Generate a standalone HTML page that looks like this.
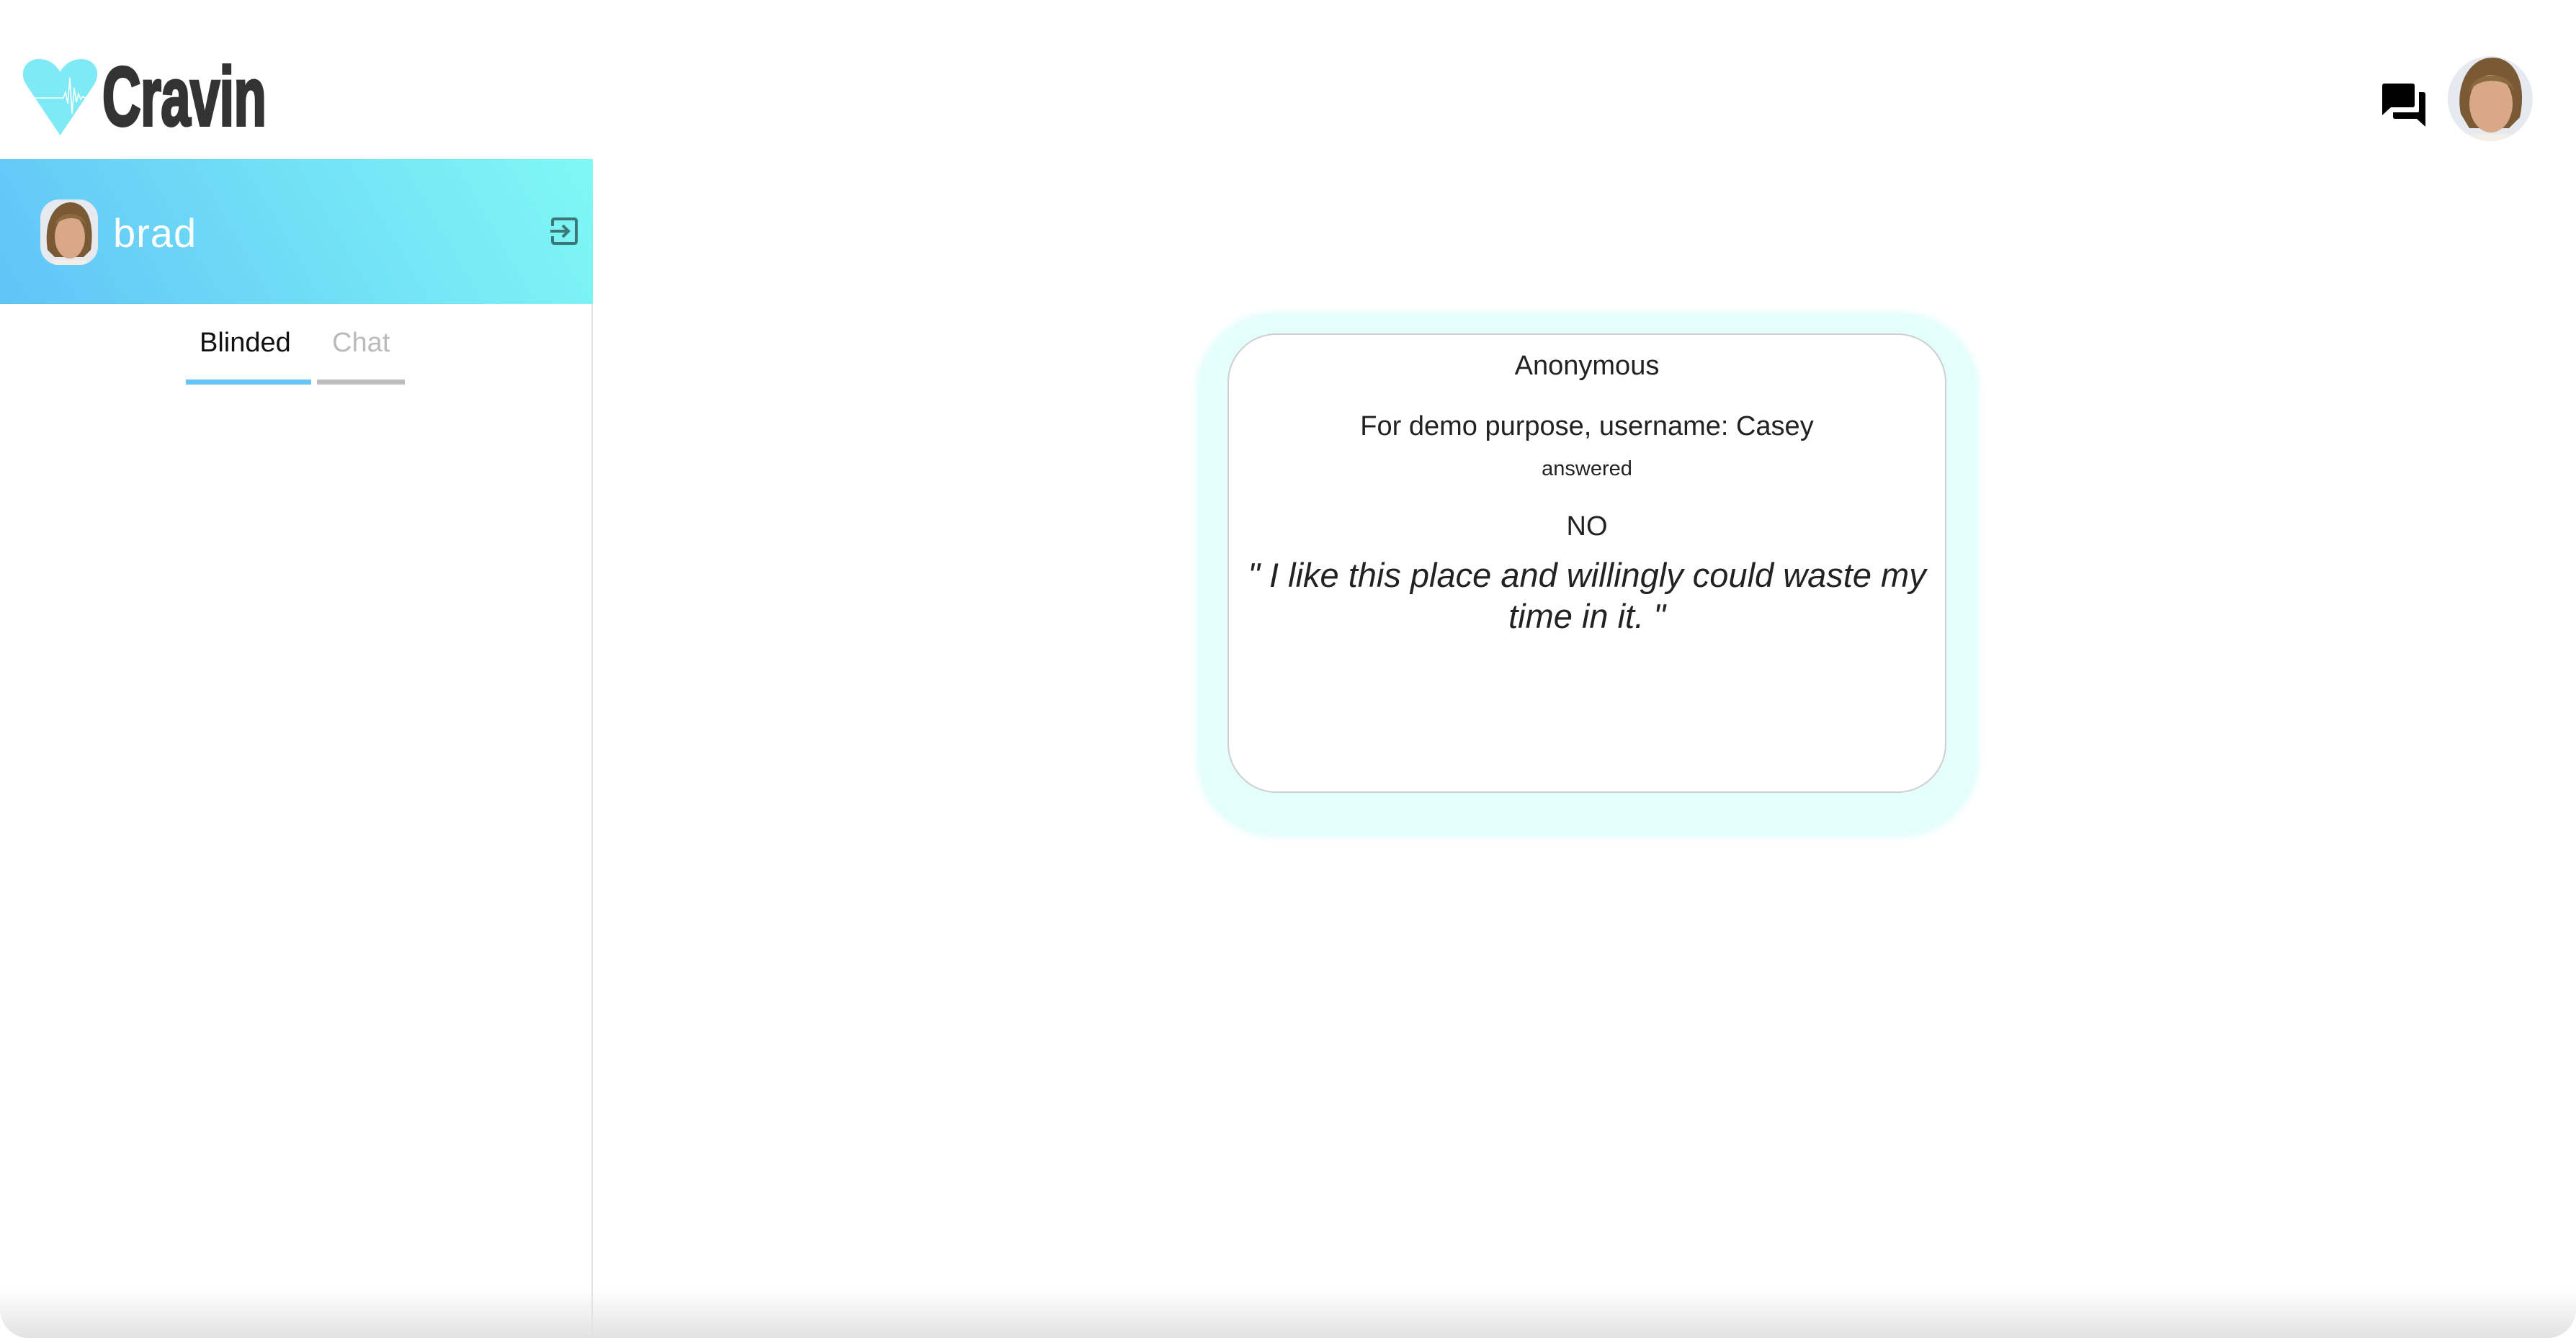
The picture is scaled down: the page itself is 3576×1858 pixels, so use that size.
<!DOCTYPE html>
<html><head><meta charset="utf-8">
<style>
html,body{margin:0;padding:0;width:3576px;height:1858px;overflow:hidden;background:#fff;font-family:"Liberation Sans",sans-serif;}
.abs{position:absolute;}
.logo-text{left:142px;top:76px;font-family:"Liberation Sans Narrow","Liberation Sans",sans-serif;font-weight:bold;font-size:116px;color:#333;transform:scaleX(0.64);transform-origin:left top;letter-spacing:-1px;line-height:1;-webkit-text-stroke:4px #333;}
.sidebar{left:0;top:221px;width:823px;height:1637px;border-right:2px solid #e4e4e4;box-sizing:border-box;}
.head{left:0;top:221px;width:823px;height:201px;background:linear-gradient(60deg,#61c3f7 0%,#6fdcf6 45%,#7ff8f5 100%);}
.name{left:157px;top:291px;font-size:56px;color:#fff;font-weight:300;letter-spacing:1px;}
.tab{font-size:38px;top:455px;}
.card-glow{left:1660px;top:433px;width:1088px;height:730px;border-radius:110px;background:#e4fdfd;filter:blur(4px);}
.card{left:1704px;top:463px;width:998px;height:638px;border-radius:68px;background:#fff;border:2px solid #cfcfcf;box-sizing:border-box;text-align:center;color:#222;}
.card div{position:absolute;left:0;right:0;}
.bottom{left:0;top:1790px;width:3576px;height:68px;background:linear-gradient(#fff0,#e2e2e2);border-radius:0 0 40px 40px;}
</style></head><body>
<svg class="abs" style="left:30px;top:82px" width="107" height="106" viewBox="0 0 107 106">
<path d="M53.5 106 L8 38 C-6 18 6 0 24 0 C38 0 48 8 53.5 18 C59 8 69 0 83 0 C101 0 113 18 99 38 Z" fill="#7deaf5"/>
<path d="M10 54 H58 L61 46 L64 62 L67 26 L70 76 L73 40 L76 60 L79 48 L82 56 L85 52 L88 54 H98" fill="none" stroke="#fff" stroke-width="1.6"/>
</svg>
<div class="abs logo-text">Cravin</div>

<svg class="abs" style="left:3307px;top:116px" width="62" height="61" viewBox="0 0 62 61">
<path d="M3 0 H42 Q45 0 45 3 V30 Q45 33 42 33 H12 L0 44 V3 Q0 0 3 0Z" fill="#000"/>
<path d="M51 12 H57 Q60 12 60 15 V60 L48 49 H18 Q15 49 15 46 V40 H49 Q51 40 51 38 Z" fill="#000"/>
</svg>
<svg class="abs" style="left:3398px;top:78px" width="118" height="118" viewBox="0 0 118 118">
<defs><clipPath id="c1"><circle cx="59" cy="59" r="59"/></clipPath></defs>
<g clip-path="url(#c1)"><rect width="118" height="118" fill="#e6e9f0"/>
<path d="M18 80 C10 40 30 2 62 2 C95 2 110 40 100 85 L85 100 L30 100Z" fill="#7a5a34"/>
<ellipse cx="60" cy="66" rx="30" ry="40" fill="#d9a887"/>
<path d="M30 50 C32 20 90 18 92 50 C85 30 40 28 30 50Z" fill="#8a6a3e"/>
<rect x="25" y="108" width="70" height="12" fill="#f3efe8"/></g>
</svg>

<div class="abs sidebar"></div>
<div class="abs head"></div>
<svg class="abs" style="left:56px;top:277px" width="80" height="91" viewBox="0 0 80 91">
<defs><clipPath id="c2"><rect width="80" height="91" rx="26"/></clipPath></defs>
<g clip-path="url(#c2)"><rect width="80" height="91" fill="#e6e9f0"/>
<path d="M10 70 C4 30 20 4 42 4 C64 4 76 30 70 70 L60 80 L20 80Z" fill="#7a5a34"/>
<ellipse cx="41" cy="52" rx="21" ry="30" fill="#d9a887"/>
<path d="M20 38 C22 14 62 14 64 38 C58 22 28 22 20 38Z" fill="#8a6a3e"/>
<rect x="18" y="84" width="46" height="8" fill="#f3efe8"/></g>
</svg>
<div class="abs name">brad</div>
<svg class="abs" style="left:764px;top:302px" width="38" height="38" viewBox="0 0 38 38">
<path d="M3 12 V5 Q3 2 6 2 H33 Q36 2 36 5 V33 Q36 36 33 36 H6 Q3 36 3 33 V26" fill="none" stroke="#3b7775" stroke-width="4"/>
<path d="M0 19 H25 M17 11 L25 19 L17 27" fill="none" stroke="#3b7775" stroke-width="4"/>
</svg>
<div class="abs tab" style="left:277px;color:#111">Blinded</div>
<div class="abs tab" style="left:461px;color:#bbb">Chat</div>
<div class="abs" style="left:258px;top:527px;width:174px;height:7px;background:#62c4f7"></div>
<div class="abs" style="left:440px;top:527px;width:122px;height:7px;background:#bdbdbd"></div>

<div class="abs card-glow"></div>
<div class="abs card">
<div style="top:22px;font-size:38px">Anonymous</div>
<div style="top:106px;font-size:38px">For demo purpose, username: Casey</div>
<div style="top:170px;font-size:29px">answered</div>
<div style="top:245px;font-size:38px">NO</div>
<div style="top:305px;font-size:47px;font-style:italic;line-height:57px;padding:0 20px">" I like this place and willingly could waste my time in it. "</div>
</div>
<div class="abs bottom"></div>
</body></html>
